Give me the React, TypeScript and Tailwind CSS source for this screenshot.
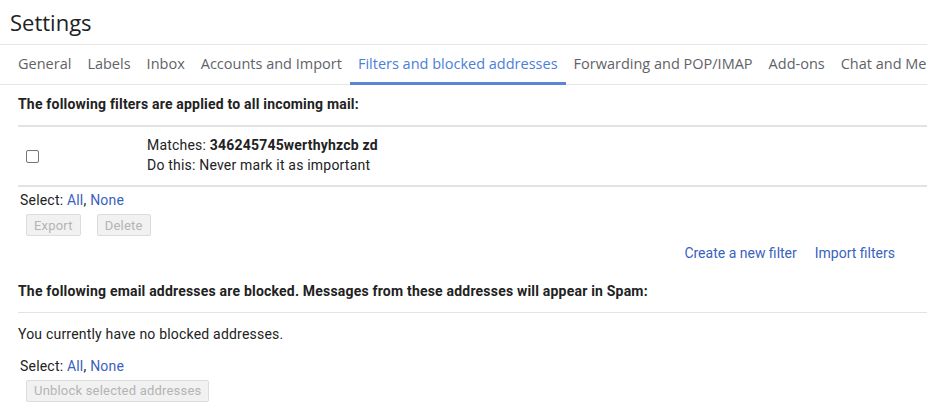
import React from 'react';

const tabs = [
  'General',
  'Labels',
  'Inbox',
  'Accounts and Import',
  'Filters and blocked addresses',
  'Forwarding and POP/IMAP',
  'Add-ons',
  'Chat and Meet',
];

const ACTIVE = 'Filters and blocked addresses';

const GrayButton: React.FC<{ label: string }> = ({ label }) => (
  <button
    disabled
    className="h-[22px] px-[7px] border border-[#dcdcdc] bg-[#f1f1f1] text-[#b4b4b4] text-[13px] rounded-[2px] leading-none"
  >
    {label}
  </button>
);

const SelectLinks: React.FC = () => (
  <div className="text-[14px] text-[#222] leading-[18px] pl-[2px]">
    Select: <a className="text-[#3b5fc0]">All</a>, <a className="text-[#3b5fc0]">None</a>
  </div>
);

export default function App() {
  return (
    <div className="w-[927px] h-[407px] overflow-hidden bg-white font-['Roboto',_sans-serif] tracking-[0.2px] text-[#222]">
      {/* title */}
      <div className="h-[45px] border-b border-[#e6e6e6] flex items-center pl-[10px]">
        <h1 className="text-[22px] font-['Open_Sans',_sans-serif] tracking-normal text-[#202124] leading-none -mt-[1px]">
          Settings
        </h1>
      </div>

      {/* tabs */}
      <div className="h-[40px] border-b border-[#e6e6e6] flex pl-[10px] whitespace-nowrap">
        {tabs.map((t) => (
          <div
            key={t}
            className={
              'flex items-center px-[8px] h-[40px] text-[14.5px] font-["Open_Sans",_sans-serif] tracking-normal border-b-[3px] ' +
              (t === ACTIVE ? 'text-[#4b80d9] border-[#5a86d6]' : 'text-[#5f6368] border-transparent')
            }
          >
            {t}
          </div>
        ))}
      </div>

      <div className="pl-[18px]">
        {/* filters heading */}
        <div className="pt-[10px] pb-[12px] text-[14px] font-bold text-[#222] leading-[18px]">
          The following filters are applied to all incoming mail:
        </div>

        <div className="border-t-2 border-b-2 border-[#e3e3e3] h-[62px] flex items-center">
          <div className="w-[129px] pl-[8px] flex items-center">
            <input
              type="checkbox"
              className="appearance-none w-[13px] h-[13px] border border-[#767676] rounded-[2px] bg-white"
            />
          </div>
          <div className="text-[14px] leading-[20px] text-[#222] -mt-[2px]">
            <div>
              Matches: <span className="font-bold">346245745werthyhzcb zd</span>
            </div>
            <div>Do this: Never mark it as important</div>
          </div>
        </div>

        <div className="pt-[4px]">
          <SelectLinks />
          <div className="flex gap-[16px] pl-[8px] mt-[5px]">
            <GrayButton label="Export" />
            <GrayButton label="Delete" />
          </div>
        </div>

        <div className="flex justify-end gap-[18px] pr-[32px] mt-[8px] text-[14px] tracking-normal text-[#3b5fc0] leading-[18px]">
          <a>Create a new filter</a>
          <a>Import filters</a>
        </div>

        {/* blocked heading */}
        <div className="pt-[20px] pb-[12px] text-[14px] font-bold text-[#222] leading-[18px] whitespace-nowrap">
          The following email addresses are blocked. Messages from these addresses will appear in Spam:
        </div>
        <div className="border-t border-[#e3e3e3] pt-[12px] text-[14px] leading-[18px] text-[#222]">
          You currently have no blocked addresses.
        </div>
        <div className="mt-[14px]">
          <SelectLinks />
          <div className="pl-[8px] mt-[3px]">
            <GrayButton label="Unblock selected addresses" />
          </div>
        </div>
      </div>
    </div>
  );
}
